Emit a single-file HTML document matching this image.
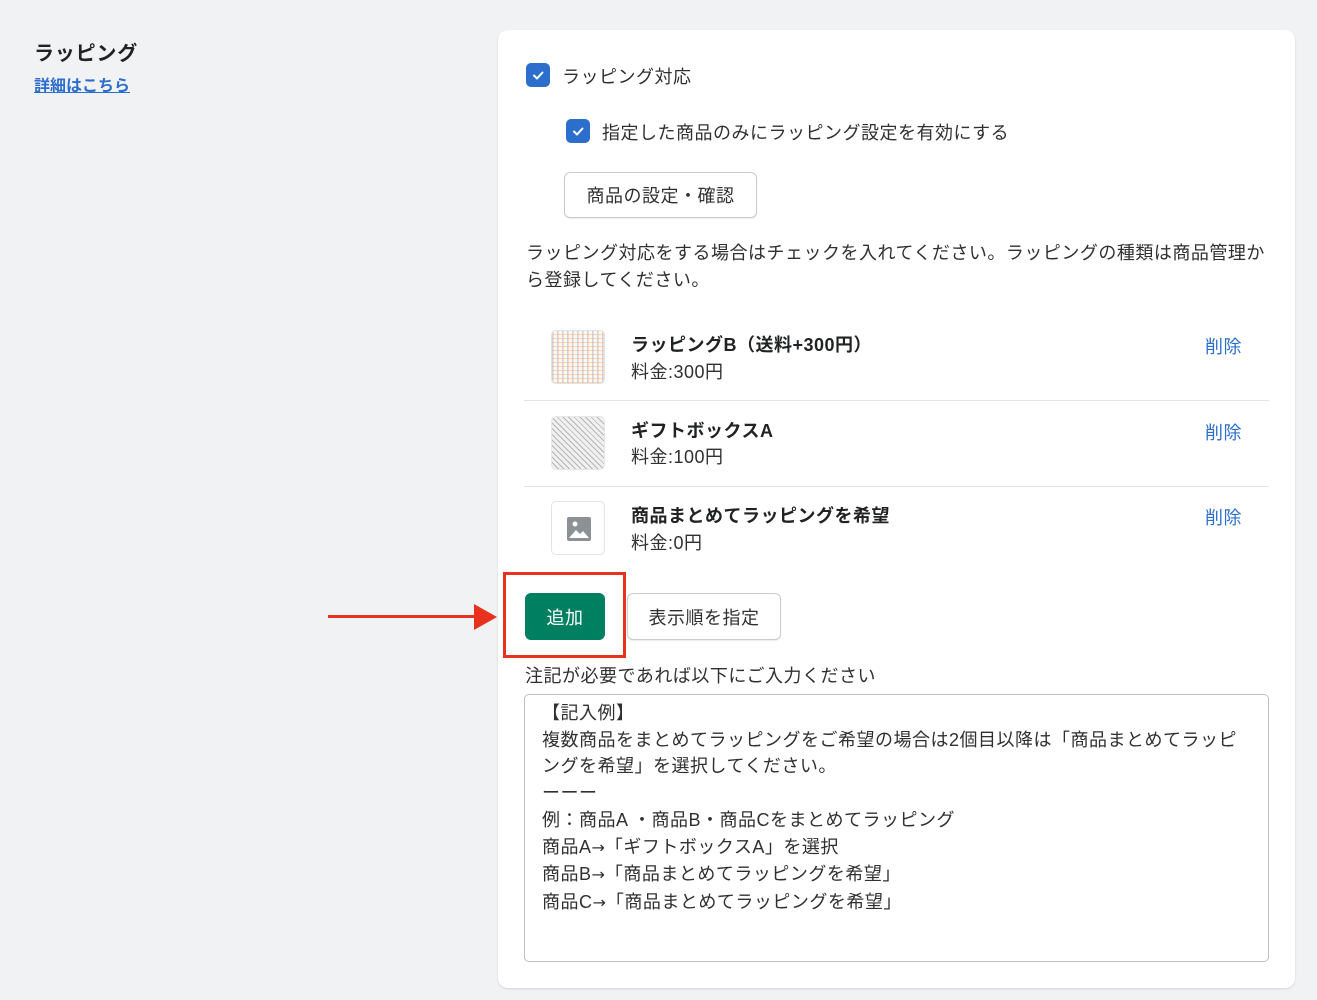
<!DOCTYPE html>
<html><head><meta charset="utf-8"><style>
*{box-sizing:border-box;margin:0;padding:0}
body{width:1317px;height:1000px;background:#f1f2f4;font-family:"Liberation Sans","Noto Sans CJK JP",sans-serif;color:#303030;position:relative;overflow:hidden}
.a{position:absolute;white-space:nowrap}
.f{font-size:18px;letter-spacing:.5px}
.card{position:absolute;left:498px;top:30px;width:797px;height:958px;background:#fff;border-radius:10px;box-shadow:0 1px 2px rgba(0,0,0,.12)}
.cb{position:absolute;width:24px;height:24px;background:#2c6ecb;border-radius:5px}
.btn{position:absolute;border:1px solid #c9cccf;border-radius:6px;background:#fff;font-size:18px;letter-spacing:.5px;display:flex;align-items:center;justify-content:center;box-shadow:0 1px 1px rgba(0,0,0,.08)}
.th{position:absolute;left:551px;width:54px;height:54px;border:1px solid #e1e3e5;border-radius:5px;overflow:hidden;background:#fff}
.t1{font-weight:bold;color:#202223}
.del{color:#2c6ecb}
.hr{position:absolute;left:524px;width:745px;height:1px;background:#e1e3e5}
.ar{font-family:"DejaVu Sans",sans-serif;font-size:16px;letter-spacing:0}
</style></head><body>
<div class="a" style="left:34px;top:37px;font-size:20px;letter-spacing:.8px;font-weight:bold;color:#202223">ラッピング</div>
<div class="a" style="left:34px;top:72px;font-size:16px;font-weight:bold;color:#2c6ecb;text-decoration:underline">詳細はこちら</div>
<div class="card"></div>
<div class="cb" style="left:526px;top:63px"><svg width="24" height="24"><path d="M8 12.5l3 3 5.5-6" stroke="#fff" stroke-width="2" fill="none" stroke-linecap="round" stroke-linejoin="round"/></svg></div>
<div class="a f" style="left:562px;top:63px">ラッピング対応</div>
<div class="cb" style="left:566px;top:119px"><svg width="24" height="24"><path d="M8 12.5l3 3 5.5-6" stroke="#fff" stroke-width="2" fill="none" stroke-linecap="round" stroke-linejoin="round"/></svg></div>
<div class="a f" style="left:602px;top:119px">指定した商品のみにラッピング設定を有効にする</div>
<div class="btn" style="left:564px;top:172px;width:193px;height:46px">商品の設定・確認</div>
<div class="a f" style="left:526px;top:240px;line-height:27px;white-space:normal;width:745px">ラッピング対応をする場合はチェックを入れてください。ラッピングの種類は商品管理から登録してください。</div>

<div class="th" style="top:330px;background:repeating-linear-gradient(0deg,rgba(255,180,120,.5) 0 1px,transparent 1px 4px),repeating-linear-gradient(90deg,rgba(140,200,230,.6) 0 1px,rgba(255,160,180,.4) 1px 2px,transparent 2px 5px),#fff8ee"></div>
<div class="a f t1" style="left:631px;top:331px">ラッピングB（送料+300円）</div>
<div class="a f" style="left:631px;top:358px">料金:300円</div>
<div class="a f del" style="left:1205px;top:333px">削除</div>
<div class="hr" style="top:400px"></div>

<div class="th" style="top:416px;background:repeating-linear-gradient(45deg,#aaa 0 1px,#eee 1px 4px),#ddd;opacity:.85"></div>
<div class="a f t1" style="left:631px;top:417px">ギフトボックスA</div>
<div class="a f" style="left:631px;top:443px">料金:100円</div>
<div class="a f del" style="left:1205px;top:419px">削除</div>
<div class="hr" style="top:486px"></div>

<div class="th" style="top:501px"><svg width="54" height="54"><rect x="15" y="15" width="24" height="24" rx="2" fill="#8c9196"/><circle cx="23" cy="22" r="2.5" fill="#fff"/><path d="M17 36l7-8 4 4 3-3 6 7z" fill="#fff"/></svg></div>
<div class="a f t1" style="left:631px;top:502px">商品まとめてラッピングを希望</div>
<div class="a f" style="left:631px;top:529px">料金:0円</div>
<div class="a f del" style="left:1205px;top:504px">削除</div>

<div class="a" style="left:328px;top:615px;width:150px;height:3px;background:#e8321e"></div>
<svg class="a" style="left:474px;top:604px" width="24" height="26"><path d="M0 0L23 13 0 26z" fill="#e8321e"/></svg>
<div class="a" style="left:503px;top:572px;width:123px;height:86px;border:3px solid #e8321e"></div>
<div class="a" style="left:525px;top:593px;width:80px;height:47px;background:#008060;border-radius:6px;color:#fff;font-size:18px;letter-spacing:.5px;display:flex;align-items:center;justify-content:center">追加</div>
<div class="btn" style="left:627px;top:593px;width:154px;height:47px">表示順を指定</div>

<div class="a f" style="left:525px;top:662px">注記が必要であれば以下にご入力ください</div>
<div class="a" style="left:524px;top:694px;width:745px;height:268px;border:1px solid #babfc3;border-radius:5px;background:#fff"></div>
<div class="a f" style="left:542px;top:700px;line-height:26.7px;white-space:normal;width:712px">【記入例】<br>複数商品をまとめてラッピングをご希望の場合は2個目以降は「商品まとめてラッピングを希望」を選択してください。<br>ーーー<br>例：商品A ・商品B・商品Cをまとめてラッピング<br>商品A<span class="ar">→</span>「ギフトボックスA」を選択<br>商品B<span class="ar">→</span>「商品まとめてラッピングを希望」<br>商品C<span class="ar">→</span>「商品まとめてラッピングを希望」</div>
</body></html>
